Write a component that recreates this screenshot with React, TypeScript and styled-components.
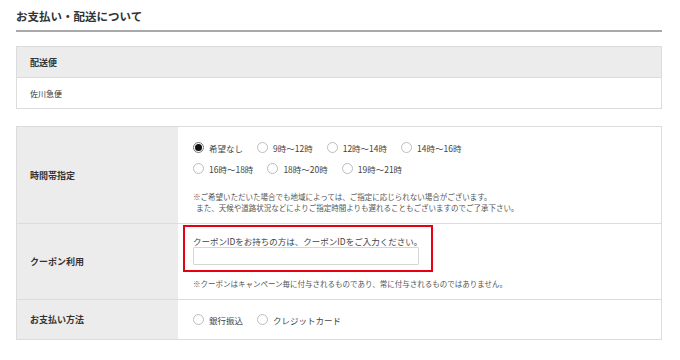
import styled, { createGlobalStyle } from 'styled-components'

const GlobalStyle = createGlobalStyle`
  html, body {
    margin: 0;
    padding: 0;
    background: #fff;
  }
  body {
    font-family: "Noto Sans CJK JP", "Noto Sans", sans-serif;
    color: #333;
  }
`

const Page = styled.main`
  width: 680px;
  height: 360px;
  box-sizing: border-box;
  padding: 0 18px 0 16px;
  overflow: hidden;
`

const Heading = styled.h2`
  margin: 0;
  padding-top: 8px;
  font-size: 11.5px;
  line-height: 16px;
  font-weight: 700;
  padding-bottom: 6px;
  border-bottom: 2px solid #a9a9a9;
`

const Table = styled.section<{ $gap: number }>`
  margin-top: ${(p) => p.$gap}px;
  border: 1px solid #dcdcdc;
  border-bottom: none;
`

const SimpleRow = styled.div<{ $head?: boolean }>`
  height: 30px;
  display: flex;
  align-items: center;
  padding-left: 13px;
  font-size: ${(p) => (p.$head ? 9 : 8)}px;
  font-weight: ${(p) => (p.$head ? 700 : 400)};
  background: ${(p) => (p.$head ? '#ececec' : '#fff')};
  border-bottom: 1px solid #dcdcdc;
`

const FormGrid = styled.div`
  display: grid;
  grid-template-columns: 161px 1fr;
`

const Label = styled.div`
  display: flex;
  align-items: center;
  padding-left: 13px;
  font-size: 9px;
  font-weight: 700;
  background: #ececec;
  border-bottom: 1px solid #dcdcdc;
`

const Cell = styled.div<{ $pt: number; $pb: number }>`
  padding: ${(p) => p.$pt}px 10px ${(p) => p.$pb}px 15px;
  border-bottom: 1px solid #dcdcdc;
  background: #fff;
`

const RadioLine = styled.div`
  display: flex;
  align-items: center;
  height: 21px;
  gap: 14px;
`

const Option = styled.label`
  display: flex;
  align-items: center;
  gap: 5px;
  font-size: 8.5px;
  color: #444;
  white-space: nowrap;
`

const Dot = styled.span<{ $on?: boolean }>`
  width: 11px;
  height: 11px;
  box-sizing: border-box;
  border-radius: 50%;
  border: 1px solid ${(p) => (p.$on ? '#777' : '#bdbdbd')};
  background: #fff;
  display: flex;
  align-items: center;
  justify-content: center;

  &::after {
    content: '';
    display: ${(p) => (p.$on ? 'block' : 'none')};
    width: 7px;
    height: 7px;
    border-radius: 50%;
    background: #111;
  }
`

const Note = styled.p<{ $mt: number }>`
  margin: ${(p) => p.$mt}px 0 0;
  font-size: 7.5px;
  line-height: 11px;
  color: #555;
  white-space: nowrap;
`

const Highlight = styled.div`
  width: fit-content;
  margin-left: -10px;
  border: 2px solid #e60012;
  padding: 8px 9px 5px 8px;
`

const Prompt = styled.div`
  font-size: 8.5px;
  line-height: 12px;
  color: #444;
  white-space: nowrap;
`

const CouponInput = styled.input`
  display: block;
  width: 226px;
  height: 18px;
  box-sizing: border-box;
  border: 1px solid #d6d6d6;
  border-radius: 1px;
  margin: 0;
  padding: 0 4px;
  font-size: 8px;
  outline: none;
`

const Radio = ({ label, on }: { label: string; on?: boolean }) => (
  <Option>
    <Dot $on={on} />
    {label}
  </Option>
)

export default function App() {
  return (
    <>
      <GlobalStyle />
      <Page>
        <Heading>お支払い・配送について</Heading>

        <Table $gap={14}>
          <SimpleRow $head>配送便</SimpleRow>
          <SimpleRow>佐川急便</SimpleRow>
        </Table>

        <Table $gap={17}>
          <FormGrid>
            <Label>時間帯指定</Label>
            <Cell $pt={10} $pb={10}>
              <RadioLine>
                <Radio label="希望なし" on />
                <Radio label="9時～12時" />
                <Radio label="12時～14時" />
                <Radio label="14時～16時" />
              </RadioLine>
              <RadioLine>
                <Radio label="16時～18時" />
                <Radio label="18時～20時" />
                <Radio label="19時～21時" />
              </RadioLine>
              <Note $mt={12}>
                ※ご希望いただいた場合でも地域によっては、ご指定に応じられない場合がございます。
                <br />
                &nbsp;&nbsp;また、天候や道路状況などによりご指定時間よりも遅れることもございますのでご了承下さい。
              </Note>
            </Cell>

            <Label>クーポン利用</Label>
            <Cell $pt={1} $pb={10}>
              <Highlight>
                <Prompt>クーポンIDをお持ちの方は、クーポンIDをご入力ください。</Prompt>
                <CouponInput type="text" />
              </Highlight>
              <Note $mt={6}>※クーポンはキャンペーン毎に付与されるものであり、常に付与されるものではありません。</Note>
            </Cell>

            <Label>お支払い方法</Label>
            <Cell $pt={9} $pb={9}>
              <RadioLine>
                <Radio label="銀行振込" />
                <Radio label="クレジットカード" />
              </RadioLine>
            </Cell>
          </FormGrid>
        </Table>
      </Page>
    </>
  )
}
